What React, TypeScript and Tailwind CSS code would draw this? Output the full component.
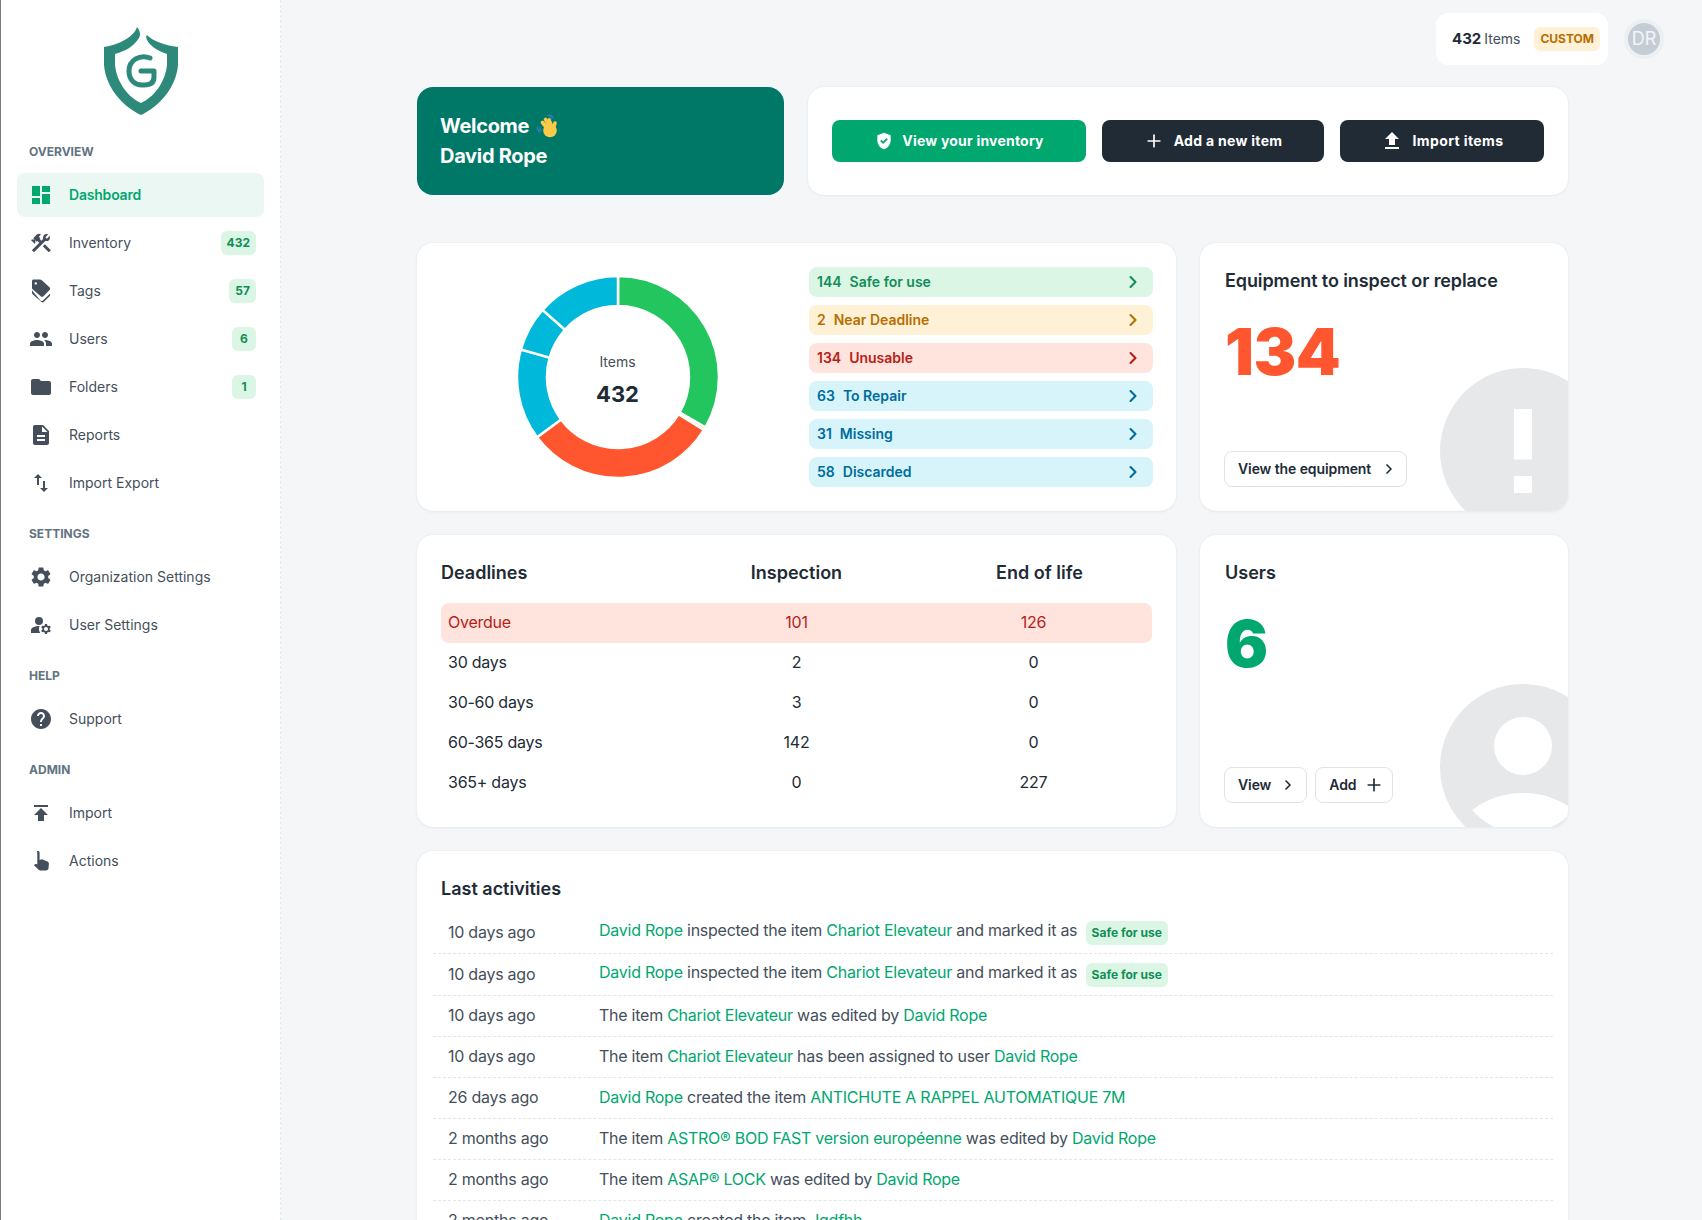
import { ChevronRight, Plus } from 'lucide-react'
import {
  MdDashboard,
  MdPeople,
  MdFolder,
  MdDescription,
  MdSettings,
  MdManageAccounts,
  MdHelp,
  MdPublish,
  MdGppGood,
  MdFileUpload,
  MdSwapVert,
} from 'react-icons/md'
import type { ReactNode } from 'react'

const HammerWrench = ({ className }: { className?: string }) => (
  <svg viewBox="0 0 24 24" fill="currentColor" className={className}>
    <path d="M13.78 15.3L19.78 21.3L21.89 19.14L15.89 13.14L13.78 15.3M17.5 10.1C17.11 10.1 16.69 10.05 16.36 9.91L4.97 21.25L2.86 19.14L10.27 11.74L8.5 9.96L7.78 10.66L6.33 9.25V12.11L5.63 12.81L2.11 9.25L2.81 8.55H5.62L4.22 7.14L7.78 3.58C8.95 2.41 10.83 2.41 12 3.58L9.89 5.74L11.3 7.14L10.59 7.85L12.38 9.63L14.2 7.75C14.06 7.42 14 7 14 6.63C14 4.66 15.56 3.11 17.5 3.11C18.09 3.11 18.61 3.25 19.08 3.53L16.41 6.2L17.91 7.7L20.58 5.03C20.86 5.5 21 6 21 6.63C21 8.55 19.45 10.1 17.5 10.1Z" />
  </svg>
)

const TagStack = ({ className }: { className?: string }) => (
  <svg viewBox="0 0 24 24" fill="currentColor" className={className}>
    <path
      fillRule="evenodd"
      d="M4.500 0.500h6.500c.6 0 1.100.2 1.500.6l8 7.100c.8.8.8 2 0 2.800l-6 6.200c-.8.8-2 .8-2.800 0L3.600 10.300C3.200 9.900 3 9.400 3 8.900V2c0-.8.700-1.500 1.500-1.500ZM6.800 3.200a1.200 1.200 0 1 0 0 2.400 1.200 1.200 0 0 0 0-2.400Z"
    />
    <path d="M3 11.300v2.500c0 .5.200 1 .600 1.400l8.600 7.600c.8.800 2 .8 2.800 0l5.600-5.600c.7-.7.800-1.700.3-2.500l-6.900 6.800c-.8.800-1.900.8-2.700 0Z" />
  </svg>
)

const HandUp = ({ className }: { className?: string }) => (
  <svg viewBox="0 0 24 24" fill="currentColor" className={className}>
    <path d="M9 2c.9 0 1.600.7 1.600 1.600V11l1.400-.6c.4-.2 1-.2 1.400 0l5 2c1 .4 1.600 1.400 1.500 2.500l-.4 4.400c-.1 1.300-1.200 2.200-2.500 2.200H11.500c-.7 0-1.300-.3-1.800-.8L5 16.200l.9-.9c.4-.4 1-.5 1.500-.3l.9.400V3.600C7.400 2.700 8.100 2 9 2Z" />
  </svg>
)

const WaveHand = () => (
  <svg viewBox="0 0 24 26" className="w-6 h-[26px] -my-1">
    <path d="M13 2.500c2-.6 4 .3 5 2.300M14 5c1-.3 1.800.1 2.300 1M2.500 14c-.2 2 .6 3.800 2.500 4.800M5 15c0 1 .4 1.800 1.200 2.300" fill="none" stroke="#2f7fc1" strokeWidth="1.300" strokeLinecap="round" />
    <g stroke="#fdca47" strokeWidth="3.600" strokeLinecap="round">
      <path d="M12 15 7.500 9.500" />
      <path d="M14 13 10.500 6.500" />
      <path d="M16.500 13 14 7" />
      <path d="M18.500 15 20 10" />
    </g>
    <circle cx="15" cy="17.500" r="6.800" fill="#fdca47" />
  </svg>
)

const Logo = () => (
  <svg viewBox="0 0 74 88" className="w-[74px] h-[88px]">
    <path
      fill="#2d8a7a"
      d="M33 0C36 4 37 7 35 11 C30 19 22 24 11 27V38C13 56 24 70 37 76C50 70 61 56 63 38V27C54 24 46 19 43 13C42 11 42 9 43 8C49 14 60 18 74 20V38C72 62 54 80 37 88C20 80 2 62 0 38V20C14 18 30 10 33 0Z"
    />
    <path
      d="M46 31C36 27 25 33 25 44C25 53 31 59 40 58C47 58 50 55 50 50V44H37"
      fill="none"
      stroke="#2d8a7a"
      strokeWidth="5"
      strokeLinecap="round"
      strokeLinejoin="round"
    />
  </svg>
)

const navIcon = 'w-6 h-6 text-[#454f5b]'

const sections = [
  {
    title: 'OVERVIEW',
    items: [
      { label: 'Dashboard', icon: <MdDashboard className="w-6 h-6" />, active: true },
      { label: 'Inventory', icon: <HammerWrench className={navIcon} />, badge: '432' },
      { label: 'Tags', icon: <TagStack className={navIcon} />, badge: '57' },
      { label: 'Users', icon: <MdPeople className={navIcon} />, badge: '6' },
      { label: 'Folders', icon: <MdFolder className={navIcon} />, badge: '1' },
      { label: 'Reports', icon: <MdDescription className={navIcon} /> },
      { label: 'Import Export', icon: <MdSwapVert className={navIcon} /> },
    ],
  },
  {
    title: 'SETTINGS',
    items: [
      { label: 'Organization Settings', icon: <MdSettings className={navIcon} /> },
      { label: 'User Settings', icon: <MdManageAccounts className={navIcon} /> },
    ],
  },
  {
    title: 'HELP',
    items: [{ label: 'Support', icon: <MdHelp className={navIcon} /> }],
  },
  {
    title: 'ADMIN',
    items: [
      { label: 'Import', icon: <MdPublish className={navIcon} /> },
      { label: 'Actions', icon: <HandUp className={navIcon} /> },
    ],
  },
]

function Sidebar() {
  return (
    <aside className="w-[281px] shrink-0 h-full bg-white border-l border-l-[#7a7a7a] border-r border-r-[#e6e9ec] border-dashed [border-left-style:solid] flex flex-col">
      <div className="flex justify-center pt-[27px] pb-[28px]">
        <Logo />
      </div>
      <nav className="pl-4 pr-4">
        {sections.map((section, i) => (
          <div key={section.title} className={i > 0 ? 'mt-5' : ''}>
            <div className="h-[18px] leading-[18px] pl-3 mb-3 text-xs font-bold text-[#637381]">{section.title}</div>
            <div className="flex flex-col gap-1">
              {section.items.map((item: any) => (
                <div
                  key={item.label}
                  className={`h-11 flex items-center pl-3 pr-2 rounded-lg ${item.active ? 'bg-[#ebf7f2] text-[#00a76f] font-semibold tracking-[-0.2px]' : 'text-[#454f5b]'}`}
                >
                  <span className="w-6 h-6 mr-4 shrink-0">{item.icon}</span>
                  <span className="flex-1 text-sm">{item.label}</span>
                  {item.badge && (
                    <span className="min-w-6 h-6 px-1.5 flex items-center justify-center rounded-md bg-[#dbf6e5] text-[#118d57] text-xs font-bold">
                      {item.badge}
                    </span>
                  )}
                </div>
              ))}
            </div>
          </div>
        ))}
      </nav>
    </aside>
  )
}

const Card = ({ className, children }: { className?: string; children: ReactNode }) => (
  <div className={`bg-white rounded-2xl shadow-[0_0_2px_rgba(145,158,171,0.2),0_2px_4px_-2px_rgba(145,158,171,0.12)] ${className ?? ''}`}>{children}</div>
)

const statuses = [
  { count: 144, label: 'Safe for use', row: 'bg-[#dbf6e5] text-[#118d57]' },
  { count: 2, label: 'Near Deadline', row: 'bg-[#fff1d6] text-[#b76e00]' },
  { count: 134, label: 'Unusable', row: 'bg-[#ffe4de] text-[#b71d18]' },
  { count: 63, label: 'To Repair', row: 'bg-[#d6f4f9] text-[#006c9c]' },
  { count: 31, label: 'Missing', row: 'bg-[#d6f4f9] text-[#006c9c]' },
  { count: 58, label: 'Discarded', row: 'bg-[#d6f4f9] text-[#006c9c]' },
]

const segments = [
  { value: 144, color: '#22c55e' },
  { value: 2, color: '#ffab00' },
  { value: 134, color: '#ff5630' },
  { value: 63, color: '#00b8d9' },
  { value: 31, color: '#00b8d9' },
  { value: 58, color: '#00b8d9' },
]

function Donut() {
  const total = segments.reduce((a, s) => a + s.value, 0)
  const R = 101
  const r = 71
  const c = 102
  let start = 0
  const pt = (rad: number, t: number) => {
    const a = t * 2 * Math.PI - Math.PI / 2
    return `${(c + rad * Math.cos(a)).toFixed(2)} ${(c + rad * Math.sin(a)).toFixed(2)}`
  }
  return (
    <div className="relative w-[204px] h-[204px]">
      <svg viewBox="0 0 204 204" className="w-[204px] h-[204px]">
        {segments.map((s, i) => {
          const end = start + s.value / total
          const large = end - start > 0.5 ? 1 : 0
          const d = `M${pt(R, start)}A${R} ${R} 0 ${large} 1 ${pt(R, end)}L${pt(r, end)}A${r} ${r} 0 ${large} 0 ${pt(r, start)}Z`
          start = end
          return <path key={i} d={d} fill={s.color} stroke="#fff" strokeWidth="2.500" />
        })}
      </svg>
      <div className="absolute inset-0 flex flex-col items-center justify-center pt-[6px] text-[#212b36]">
        <div className="text-sm text-[#454f5b] mb-[7px]">Items</div>
        <div className="text-[22px] leading-[30px] font-bold">432</div>
      </div>
    </div>
  )
}

const deadlines = [
  { label: 'Overdue', a: 101, b: 126, hot: true },
  { label: '30 days', a: 2, b: 0 },
  { label: '30-60 days', a: 3, b: 0 },
  { label: '60-365 days', a: 142, b: 0 },
  { label: '365+ days', a: 0, b: 227 },
]

const L = ({ children }: { children: ReactNode }) => <span className="text-[#00a76f]">{children}</span>

const SafeChip = () => (
  <span className="inline-flex items-center h-6 px-1.5 ml-1 mt-0.5 rounded-md bg-[#dbf6e5] text-[#118d57] text-xs font-bold align-middle tracking-normal">Safe for use</span>
)

const activities: { when: string; body: ReactNode; tall?: boolean }[] = [
  { when: '10 days ago', tall: true, body: <><L>David Rope</L> inspected the item <L>Chariot Elevateur</L> and marked it as <SafeChip /></> },
  { when: '10 days ago', tall: true, body: <><L>David Rope</L> inspected the item <L>Chariot Elevateur</L> and marked it as <SafeChip /></> },
  { when: '10 days ago', body: <>The item <L>Chariot Elevateur</L> was edited by <L>David Rope</L></> },
  { when: '10 days ago', body: <>The item <L>Chariot Elevateur</L> has been assigned to user <L>David Rope</L></> },
  { when: '26 days ago', body: <><L>David Rope</L> created the item <L>ANTICHUTE A RAPPEL AUTOMATIQUE 7M</L></> },
  { when: '2 months ago', body: <>The item <L>ASTRO® BOD FAST version européenne</L> was edited by <L>David Rope</L></> },
  { when: '2 months ago', body: <>The item <L>ASAP® LOCK</L> was edited by <L>David Rope</L></> },
  { when: '2 months ago', body: <><L>David Rope</L> created the item <L>Jgdfhh</L></> },
]

const OutlineButton = ({ children, className }: { children: ReactNode; className?: string }) => (
  <div className={`h-9 pl-[13px] inline-flex items-center rounded-lg border border-[#dfe3e8] bg-white text-sm font-semibold tracking-[-0.1px] text-[#212b36] ${className ?? 'pr-[10px]'}`}>{children}</div>
)

export default function App() {
  return (
    <div className="h-screen overflow-hidden flex bg-[#f4f6f8] text-[#212b36] font-['Inter','Liberation_Sans',sans-serif]">
      <Sidebar />
      <main className="flex-1 min-w-0">
        <header className="h-[87px] pt-[13px] pr-[38px] flex justify-end gap-4">
          <div className="h-[52px] w-[172px] bg-white rounded-xl flex items-center justify-between pl-4 pr-2 text-sm">
            <span><b className="font-bold text-[15px]">432</b><span className="text-[#454f5b] ml-[3px]">Items</span></span>
            <span className="h-6 px-1.5 flex items-center rounded-md bg-[#fff1d6] text-[#b76e00] text-xs font-bold">CUSTOM</span>
          </div>
          <div className="w-10 h-10 mt-1.5 rounded-full border-[4px] border-[#edf0f2] bg-[#c4cdd5] flex items-center justify-center text-white/80 text-lg">DR</div>
        </header>

        <div className="ml-[136px] w-[1151px] flex flex-col">
          <div className="flex gap-6 mb-12">
            <div className="w-[367px] h-[108px] rounded-2xl bg-[#007867] text-white font-bold text-xl tracking-[-0.3px] leading-[30px] flex flex-col justify-center pl-[23px]">
              <div className="flex items-center gap-[6px]">Welcome <WaveHand /></div>
              <div>David Rope</div>
            </div>
            <Card className="flex-1 h-[108px] flex items-center gap-4 px-6">
              <div className="w-[254px] h-[42px] rounded-lg bg-[#00a76f] text-white text-sm font-bold tracking-[0.2px] flex items-center justify-center gap-2">
                <MdGppGood className="w-5 h-5" /> View your inventory
              </div>
              <div className="w-[222px] h-[42px] rounded-lg bg-[#212b36] text-white text-sm font-bold tracking-[0.3px] flex items-center justify-center gap-2.5">
                <Plus className="w-5 h-5" strokeWidth={2} /> Add a new item
              </div>
              <div className="w-[204px] h-[42px] rounded-lg bg-[#212b36] text-white text-sm font-bold tracking-[0.4px] flex items-center justify-center gap-2">
                <MdFileUpload className="w-6 h-6" /> Import items
              </div>
            </Card>
          </div>

          <div className="flex gap-6 mb-6">
            <Card className="w-[759px] h-[268px] flex items-center pr-[23px]">
              <div className="w-[392px] flex justify-center pl-[9px]">
                <Donut />
              </div>
              <div className="flex-1 flex flex-col gap-2">
                {statuses.map((s) => (
                  <div key={s.label} className={`h-[30px] rounded-lg flex items-center justify-between pl-2 pr-[10px] text-sm font-semibold ${s.row}`}>
                    <span><span>{s.count}</span><span className="ml-2">{s.label}</span></span>
                    <ChevronRight className="w-5 h-5" strokeWidth={2.5} />
                  </div>
                ))}
              </div>
            </Card>
            <Card className="relative overflow-hidden flex-1 h-[268px] p-6 flex flex-col">
              <svg viewBox="0 0 128 143" className="absolute right-0 bottom-0 w-[128px] h-[143px]">
                <circle cx="83" cy="83" r="83" fill="#e7e8ea" />
                <rect x="74" y="41" width="18" height="50.500" fill="#fff" />
                <rect x="74" y="108" width="18" height="17" fill="#fff" />
              </svg>
              <h2 className="relative pl-px text-lg font-semibold tracking-[-0.1px] leading-[27px]">Equipment to inspect or replace</h2>
              <div className="relative mt-[26px] pl-px text-[64px] leading-[64px] font-black tracking-[-0.5px] text-[#ff5630]">134</div>
              <div className="relative mt-auto">
                <OutlineButton className="pr-[9px]">View the equipment <ChevronRight className="w-4 h-4 ml-[10px]" strokeWidth={2.5} /></OutlineButton>
              </div>
            </Card>
          </div>

          <div className="flex gap-6 mb-6">
            <Card className="w-[759px] h-[292px] px-6 pt-6">
              <div className="grid grid-cols-3 h-7 items-center mb-4 text-lg font-semibold">
                <div>Deadlines</div>
                <div className="text-center">Inspection</div>
                <div className="text-center pl-3">End of life</div>
              </div>
              {deadlines.map((d) => (
                <div key={d.label} className={`grid grid-cols-3 h-10 pb-0.5 items-center rounded-lg tracking-[-0.25px] ${d.hot ? 'bg-[#ffe4de] text-[#b71d18]' : ''}`}>
                  <div className="pl-[7px]">{d.label}</div>
                  <div className="text-center">{d.a}</div>
                  <div className="text-center">{d.b}</div>
                </div>
              ))}
            </Card>
            <Card className="relative overflow-hidden flex-1 h-[292px] p-6 flex flex-col">
              <svg viewBox="0 0 128 143" className="absolute right-0 bottom-0 w-[128px] h-[143px]">
                <defs>
                  <clipPath id="user-disc">
                    <circle cx="83" cy="83" r="66.500" />
                  </clipPath>
                </defs>
                <circle cx="83" cy="83" r="83" fill="#e7e8ea" />
                <circle cx="83" cy="62" r="29" fill="#fff" />
                <ellipse cx="83" cy="160" rx="68" ry="51" fill="#fff" clipPath="url(#user-disc)" />
              </svg>
              <h2 className="relative pl-px text-lg font-semibold leading-[27px]">Users</h2>
              <div className="relative mt-[26px] pl-px text-[64px] leading-[64px] font-black text-[#00a76f]">6</div>
              <div className="relative mt-auto flex gap-2">
                <OutlineButton>View <ChevronRight className="w-4 h-4 ml-[9px]" strokeWidth={2.5} /></OutlineButton>
                <OutlineButton className="pr-2">Add <Plus className="w-5 h-5 ml-2" strokeWidth={2} /></OutlineButton>
              </div>
            </Card>
          </div>

          <Card className="pt-6 pl-4 pr-[15px] pb-6">
            <h2 className="pl-2 text-lg font-semibold leading-[27px] mb-[10px]">Last activities</h2>
            {activities.map((a, i) => (
              <div key={i} className={`flex items-center pb-0.5 border-b border-dashed border-[#e3e6e9] tracking-[-0.25px] ${a.tall ? 'h-[42px]' : 'h-[41px]'}`}>
                <div className="w-[166px] pl-[15px] shrink-0 text-[#454f5b]">{a.when}</div>
                <div className="text-[#454f5b]">{a.body}</div>
              </div>
            ))}
          </Card>
        </div>
      </main>
    </div>
  )
}
